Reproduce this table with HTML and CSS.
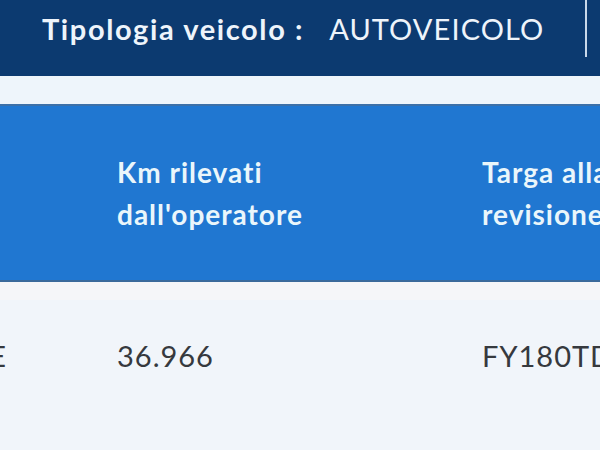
FILE: index.html
```html
<!DOCTYPE html>
<html lang="it">
<head>
<meta charset="utf-8">
<title>Dettaglio revisione</title>
<link rel="stylesheet" href="styles.css">
</head>
<body>
<div class="page">
  <div class="type-bar">
    <span class="type-label">Tipologia veicolo :</span>
    <span class="type-value">AUTOVEICOLO</span>
    <span class="type-sep"></span>
  </div>
  <div class="spacer"></div>
  <div class="table">
    <div class="row head">
      <div class="cell first"></div>
      <div class="cell">Km rilevati<br>dall'operatore</div>
      <div class="cell">Targa alla<br>revisione</div>
    </div>
    <div class="row body">
      <div class="cell first"><span>REGOLARE</span></div>
      <div class="cell">36.966</div>
      <div class="cell">FY180TD</div>
    </div>
  </div>
</div>
</body>
</html>
```

FILE: styles.css
```css
html, body {
  margin: 0;
  padding: 0;
  background: #f1f5fa;
}
.page {
  width: 600px;
  height: 450px;
  overflow: hidden;
  font-family: Lato, "Open Sans", sans-serif;
}
.type-bar {
  height: 76px;
  box-sizing: border-box;
  padding: 0 0 20px 42px;
  background: #0c3a70;
  display: flex;
  align-items: center;
  color: #eef4fb;
  white-space: nowrap;
  line-height: 29px;
}
.type-label {
  font-weight: 700;
  font-size: 29px;
  letter-spacing: 1.6px;
}
.type-value {
  font-weight: 400;
  font-size: 29px;
  margin-left: 25px;
  letter-spacing: 1.1px;
}
.type-sep {
  width: 2px;
  height: 57px;
  background: #c9d8ea;
  margin-left: 41px;
  align-self: flex-start;
  flex: none;
}
.spacer {
  height: 28px;
  background: #eef5fb;
}
.row {
  display: grid;
  grid-template-columns: 117px 365px 1fr;
  white-space: nowrap;
}
.head {
  background: #2077d1;
  border-top: 2px solid #3c70a8;
  border-bottom: 2px solid #3a6a9c;
  height: 174px;
  align-items: center;
  color: #eaf6fb;
  font-weight: 700;
  font-size: 28px;
  letter-spacing: 1px;
  line-height: 42px;
  box-shadow: 0 3px 0 #d4f1fb;
}
.body {
  padding-top: 57px;
  color: #36393e;
  font-size: 29px;
  letter-spacing: 1px;
  line-height: 34px;
  background: linear-gradient(#f5f6f9 0, #f5f6f9 18px, #f1f5fa 18px);
}
.cell {
  overflow: hidden;
}
.first {
  display: flex;
  justify-content: flex-end;
  padding-right: 110px;
}
.first span {
  flex: none;
}
```
